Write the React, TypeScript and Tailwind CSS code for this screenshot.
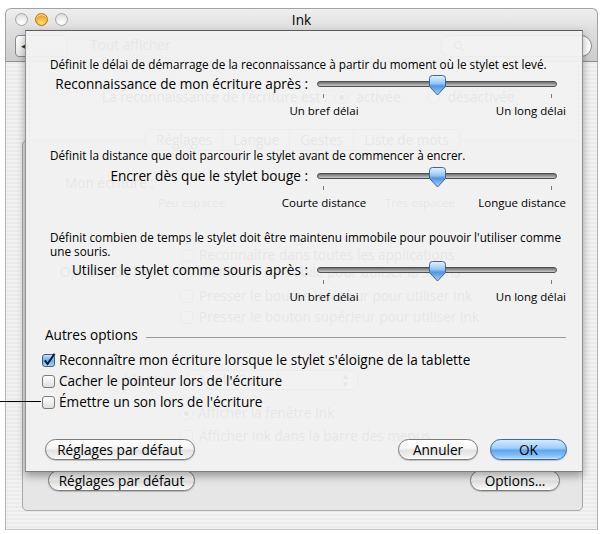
import React from "react";

const font = "font-['Open_Sans','Liberation_Sans',sans-serif]";

function Light({ orange = false }: { orange?: boolean }) {
  return orange ? (
    <div className="w-[13px] h-[13px] rounded-full border border-[#b86d12] bg-[image:radial-gradient(circle_at_50%_80%,#ffe680_0%,#f9ad2a_55%,#d9800c_100%)] shadow-[inset_0_1px_1px_rgba(255,255,255,0.8)]" />
  ) : (
    <div className="w-[13px] h-[13px] rounded-full border border-[#a6a6a6] bg-[image:radial-gradient(circle_at_50%_80%,#ffffff_0%,#ebebeb_55%,#d2d2d2_100%)]" />
  );
}

function AquaButton({
  children,
  className = "",
  primary = false,
}: {
  children: React.ReactNode;
  className?: string;
  primary?: boolean;
}) {
  const skin = primary
    ? "border-[#3d66a6] bg-[image:linear-gradient(180deg,#d3e9fd_0%,#a2cff8_42%,#5ea7ee_55%,#86c4fd_85%,#c4e5ff_100%)]"
    : "border-[#7b7b7b] bg-[image:linear-gradient(180deg,#ffffff_0%,#f8f8f8_42%,#e3e3e3_55%,#f0f0f0_85%,#ffffff_100%)]";
  return (
    <div
      className={`h-[21px] rounded-full border flex items-center justify-center text-[13.6px] leading-none text-black shadow-[0_1px_1px_rgba(0,0,0,0.2)] ${skin} ${className}`}
    >
      {children}
    </div>
  );
}

function Knob() {
  return (
    <svg width="17" height="21" viewBox="0 0 17 21">
      <defs>
        <linearGradient id="knobg" x1="0" y1="0" x2="0" y2="1">
          <stop offset="0" stopColor="#e6f2ff" />
          <stop offset="0.4" stopColor="#96c8f6" />
          <stop offset="0.55" stopColor="#4f96e2" />
          <stop offset="1" stopColor="#a6d4fc" />
        </linearGradient>
      </defs>
      <path
        d="M3.5 0.5 H13.5 A3 3 0 0 1 16.5 3.5 V11.5 L8.5 20 L0.5 11.5 V3.5 A3 3 0 0 1 3.5 0.5 Z"
        fill="url(#knobg)"
        stroke="#45638f"
      />
    </svg>
  );
}

function CheckBox({ checked = false }: { checked?: boolean }) {
  return (
    <svg width="14" height="14" viewBox="0 0 14 14" className="shrink-0">
      <defs>
        <linearGradient id="cbw" x1="0" y1="0" x2="0" y2="1">
          <stop offset="0" stopColor="#ffffff" />
          <stop offset="1" stopColor="#dedede" />
        </linearGradient>
        <linearGradient id="cbb" x1="0" y1="0" x2="0" y2="1">
          <stop offset="0" stopColor="#cfe6fc" />
          <stop offset="0.5" stopColor="#6aaef0" />
          <stop offset="1" stopColor="#a9d6fd" />
        </linearGradient>
      </defs>
      <rect
        x="0.5"
        y="1.5"
        width="12"
        height="12"
        rx="2.5"
        fill={checked ? "url(#cbb)" : "url(#cbw)"}
        stroke={checked ? "#3f5f8c" : "#7c7c7c"}
      />
      {checked && (
        <path d="M2.8 7.4 L5.6 10.8 L12.6 0.8" fill="none" stroke="#111827" strokeWidth="2" />
      )}
    </svg>
  );
}

function Radio({ on = false }: { on?: boolean }) {
  return (
    <div className="w-[13px] h-[13px] rounded-full border border-[#7c7c7c] bg-white flex items-center justify-center shrink-0">
      {on && <div className="w-[5px] h-[5px] rounded-full bg-[#333]" />}
    </div>
  );
}

function SliderBlock({
  label,
  left,
  right,
  mt,
}: {
  label: string;
  left: string;
  right: string;
  mt: string;
}) {
  return (
    <>
      <div className={`flex items-center h-[20px] ${mt}`}>
        <div className="w-[258px] text-right text-[13.6px] leading-[16px] whitespace-nowrap">{label}</div>
        <div className="ml-[9px] relative w-[240px] h-[6px] rounded-full border border-[#4f4f4f] bg-[image:linear-gradient(180deg,#6e6e6e,#c9c9c9)]">
          <div className="absolute left-[111px] top-[-7px]">
            <Knob />
          </div>
        </div>
      </div>
      <div className="flex h-[4px]">
        <div className="ml-[273px] w-px h-[4px] bg-[#7a7a7a]" />
        <div className="ml-[227px] w-px h-[4px] bg-[#7a7a7a]" />
      </div>
      <div className="flex mt-[6px] text-[11.5px] leading-[14px] whitespace-nowrap">
        <div className="ml-[204px] w-[140px] text-center">{left}</div>
        <div className="flex-1 text-right">{right}</div>
      </div>
    </>
  );
}

export default function App() {
  return (
    <div className={`w-[604px] h-[534px] bg-white overflow-hidden relative text-black ${font}`}>
      <div className="relative ml-[5px] mt-[8px] w-[593px] h-[522px] flex flex-col">
        {/* Title bar */}
        <div className="h-[22px] rounded-t-[6px] border border-b-0 border-[#a2a2a2] bg-[image:linear-gradient(180deg,#efefef,#dedede)] grid grid-cols-[1fr_auto_1fr] items-center">
          <div className="flex gap-[7px] pl-[9px]">
            <Light />
            <Light orange />
            <Light />
          </div>
          <div className="text-[13.6px] leading-none">Ink</div>
          <div />
        </div>

        {/* Toolbar */}
        <div className="h-[32px] border-x border-b border-x-[#a2a2a2] border-b-[#8f8f8f] bg-[image:linear-gradient(180deg,#dedede,#cdcdcd)] flex items-center">
          <div className="ml-[9px] w-[52px] h-[22px] rounded-[4px] border border-[#8a8a8a] bg-[image:linear-gradient(180deg,#ffffff,#e6e6e6)] flex items-center">
            <span className="ml-[5px] text-[9px] text-[#333]">◀</span>
          </div>
          <div className="ml-[23px] text-[13.6px]">Tout afficher</div>
          <div className="ml-auto mr-[5px] w-[152px] h-[22px] rounded-full border border-[#8a8a8a] bg-white flex items-center pl-[12px]">
            <svg width="12" height="12" viewBox="0 0 12 12">
              <circle cx="5" cy="5" r="3.5" fill="none" stroke="#555" strokeWidth="1.4" />
              <path d="M7.6 7.6 L11 11" stroke="#555" strokeWidth="1.6" />
            </svg>
          </div>
        </div>

        {/* Content */}
        <div className="flex-1 border-x border-b border-x-[#b3b3b3] border-b-[#c9c9c9] bg-[image:repeating-linear-gradient(180deg,#ebebeb_0px,#ebebeb_2px,#f2f2f2_2px,#f2f2f2_4px)] flex flex-col">
          <div className="mt-[27px] ml-[96px] h-[16px] flex items-center gap-[8px] text-[13.6px] whitespace-nowrap">
            <span>La reconnaissance de l'écriture est :</span>
            <Radio on />
            <span>activée</span>
            <span className="ml-[10px]" />
            <Radio />
            <span>désactivée</span>
          </div>

          {/* Tab box */}
          <div className="mt-[35px] ml-[16px] w-[561px] h-[371px] rounded-[5px] border border-[#a9a9a9] bg-[#e6e6e6] flex flex-col">
            <div className="-mt-[12px] self-center h-[22px] flex rounded-[5px] border border-[#8c8c8c] bg-[image:linear-gradient(180deg,#ffffff,#e2e2e2)] text-[13.6px] overflow-hidden">
              <div className="px-[10px] flex items-center border-r border-[#9a9a9a]">Réglages</div>
              <div className="px-[10px] flex items-center border-r border-[#9a9a9a]">Langue</div>
              <div className="px-[10px] flex items-center border-r border-[#9a9a9a]">Gestes</div>
              <div className="px-[10px] flex items-center">Liste de mots</div>
            </div>
            <div className="mt-[24px] ml-[42px] h-[16px] text-[13.6px] leading-[16px]">Mon écriture :</div>
            <div className="mt-[4px] h-[16px] flex text-[11.5px] leading-[16px]">
              <span className="ml-[135px]">Peu espacée</span>
              <span className="ml-[160px]">Très espacée</span>
            </div>
            <div className="mt-[36px] ml-[158px] h-[16px] flex items-center gap-[5px] text-[13.6px] whitespace-nowrap">
              <Radio />
              <span>Reconnaître dans toutes les applications</span>
            </div>
            <div className="mt-[1px] ml-[37px] h-[16px] flex items-center text-[13.6px] whitespace-nowrap">
              <span>Options de l'outil :</span>
              <span className="ml-[6px]"><Radio on /></span>
              <span className="ml-[5px]">Maintenir immobile pour utiliser la souris</span>
            </div>
            <div className="mt-[8px] ml-[157px] h-[16px] flex items-center gap-[5px] text-[13.6px] whitespace-nowrap">
              <CheckBox />
              <span>Presser le bouton inférieur pour utiliser Ink</span>
            </div>
            <div className="mt-[5px] ml-[157px] h-[16px] flex items-center gap-[5px] text-[13.6px] whitespace-nowrap">
              <CheckBox />
              <span>Presser le bouton supérieur pour utiliser Ink</span>
            </div>
            <div className="mt-[45px] ml-[40px] h-[20px] flex items-center text-[13.6px] whitespace-nowrap">
              <span>Police du bloc Ink :</span>
              <div className="ml-[8px] w-[170px] h-[20px] rounded-[4px] border border-[#8a8a8a] bg-white flex items-center justify-between px-[8px]">
                <span>Apple Casual</span>
                <span className="text-[8px] leading-[8px] flex flex-col">
                  <span>▲</span>
                  <span>▼</span>
                </span>
              </div>
            </div>
            <div className="mt-[15px] ml-[157px] h-[16px] flex items-center gap-[5px] text-[13.6px] whitespace-nowrap">
              <Radio on />
              <span>Afficher la fenêtre Ink</span>
            </div>
            <div className="mt-[7px] ml-[157px] h-[16px] flex items-center gap-[5px] text-[13.6px] whitespace-nowrap">
              <CheckBox />
              <span>Afficher Ink dans la barre des menus</span>
            </div>
            <div className="mt-[26px] flex">
              <AquaButton className="ml-[25px] w-[147px]">Réglages par défaut</AquaButton>
              <AquaButton className="ml-auto mr-[22px] w-[90px]">Options…</AquaButton>
            </div>
          </div>
        </div>

        {/* Sheet */}
        <div className="absolute left-[20px] top-[22px] w-[558px] border border-t-[#5c5c5c] border-x-[#8f8f8f] border-b-[#7d7d7d] bg-[#f1f1f1]/[0.95] shadow-[0_4px_8px_rgba(0,0,0,0.35)] pl-[24px] pr-[16px] pb-[11px] flex flex-col">
          <p className="mt-[26px] text-[11.75px] leading-[14px] whitespace-nowrap">
            Définit le délai de démarrage de la reconnaissance à partir du moment où le stylet est levé.
          </p>
          <SliderBlock
            mt="mt-[3px]"
            label="Reconnaissance de mon écriture après :"
            left="Un bref délai"
            right="Un long délai"
          />

          <p className="mt-[30px] text-[11.75px] leading-[14px] whitespace-nowrap">
            Définit la distance que doit parcourir le stylet avant de commencer à encrer.
          </p>
          <SliderBlock
            mt="mt-[4px]"
            label="Encrer dès que le stylet bouge :"
            left="Courte distance"
            right="Longue distance"
          />

          <p className="mt-[20px] text-[11.75px] leading-[14px] whitespace-nowrap">
            Définit combien de temps le stylet doit être maintenu immobile pour pouvoir l'utiliser comme
            <br />
            une souris.
          </p>
          <SliderBlock
            mt="mt-[2px]"
            label="Utiliser le stylet comme souris après :"
            left="Un bref délai"
            right="Un long délai"
          />

          <div className="mt-[23px] -ml-[5px] h-[16px] flex items-center text-[13.6px] leading-[16px]">
            <span className="whitespace-nowrap">Autres options</span>
            <div className="ml-[8px] flex-1 h-px bg-[#9a9a9a] mt-[4px]" />
          </div>

          <div className="mt-[6px] -ml-[8px] flex flex-col text-[13.6px] leading-[16px]">
            <div className="h-[21px] flex items-center gap-[3px] whitespace-nowrap">
              <CheckBox checked />
              <span>Reconnaître mon écriture lorsque le stylet s'éloigne de la tablette</span>
            </div>
            <div className="h-[21px] flex items-center gap-[3px] whitespace-nowrap">
              <CheckBox />
              <span>Cacher le pointeur lors de l'écriture</span>
            </div>
            <div className="h-[21px] flex items-center gap-[3px] whitespace-nowrap">
              <CheckBox />
              <span>Émettre un son lors de l'écriture</span>
            </div>
          </div>

          <div className="mt-[27px] flex items-center">
            <AquaButton className="-ml-[5px] w-[150px]">Réglages par défaut</AquaButton>
            <AquaButton className="ml-auto w-[80px]">Annuler</AquaButton>
            <AquaButton primary className="ml-[12px] -mr-[1px] w-[77px]">OK</AquaButton>
          </div>
        </div>
      </div>

      {/* callout line */}
      <div className="absolute left-0 top-[401px] w-[41px] h-px bg-black z-10" />
    </div>
  );
}
